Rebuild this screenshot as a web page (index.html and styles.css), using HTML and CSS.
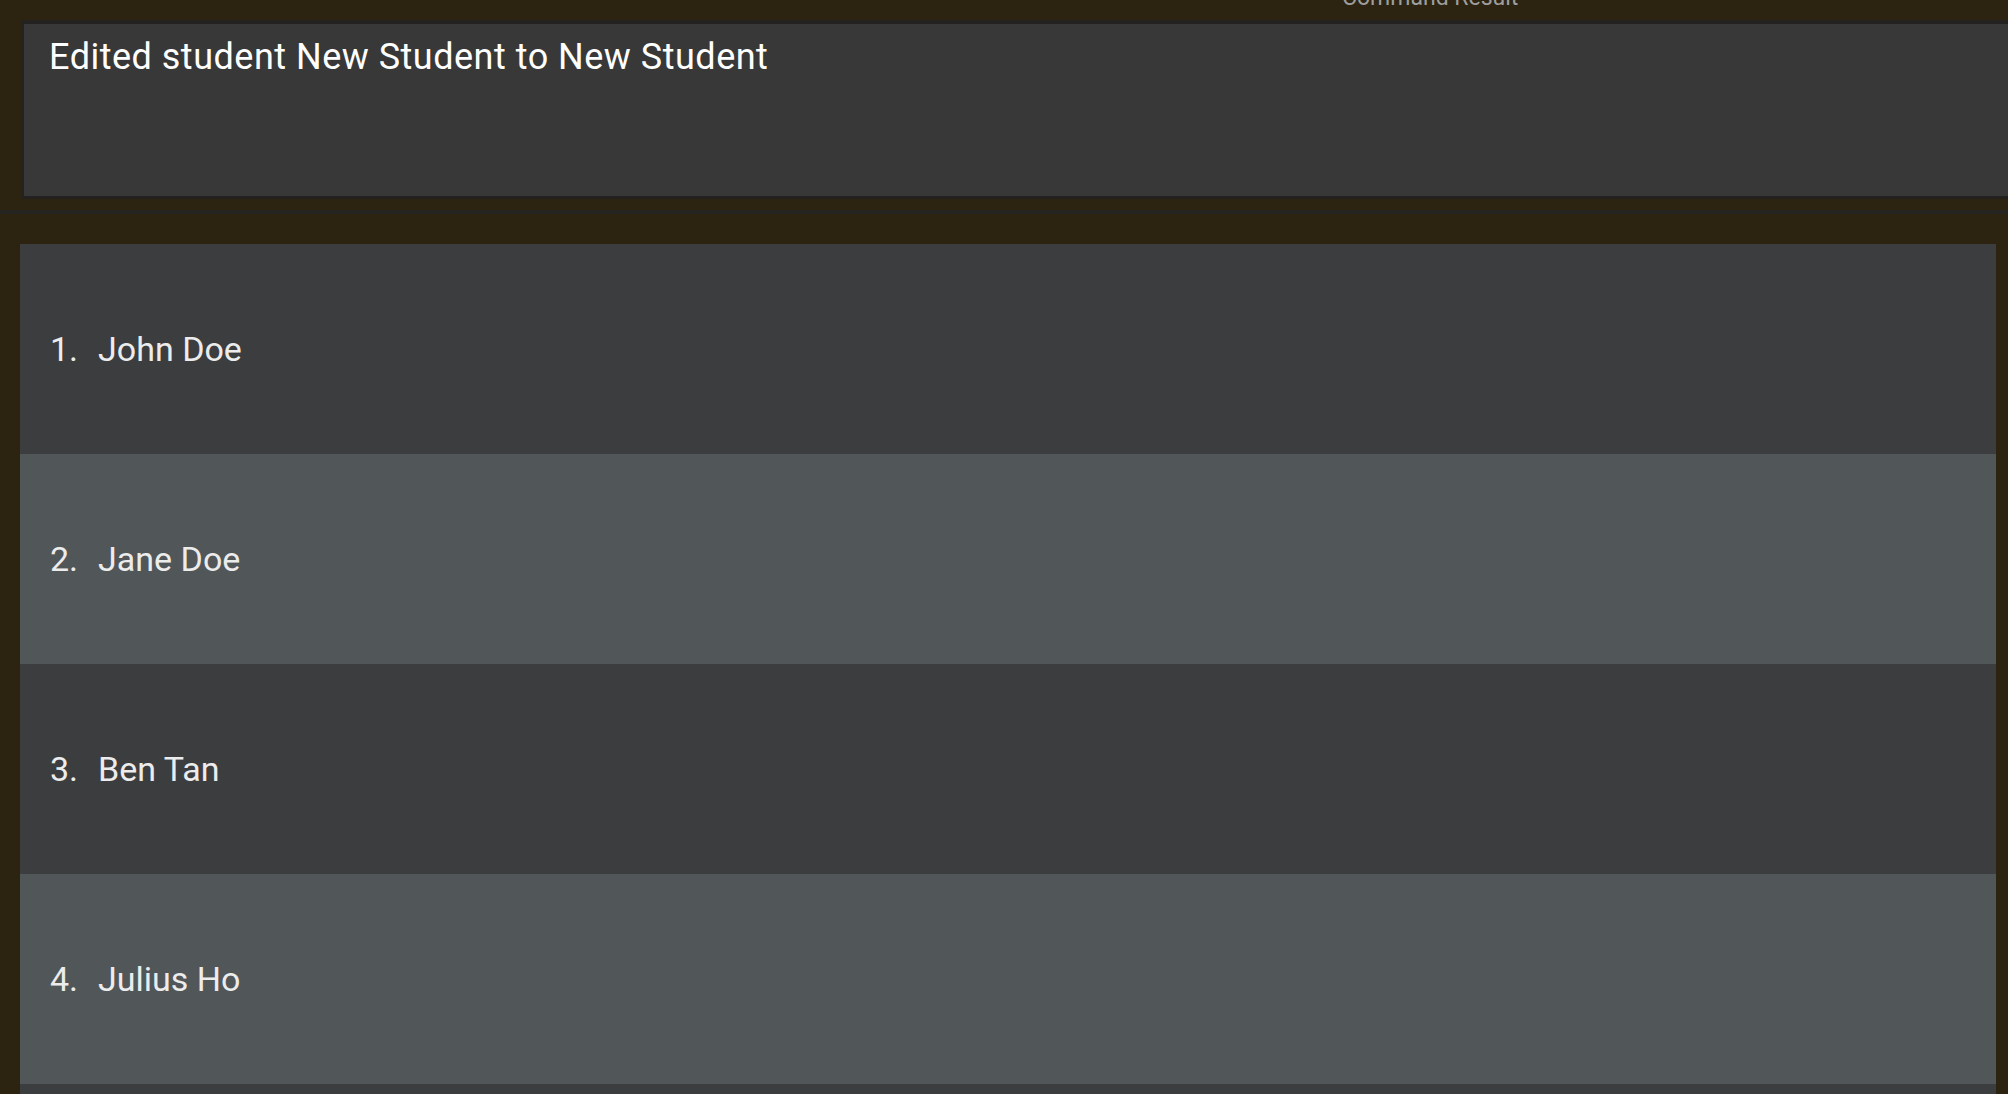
FILE: index.html
```html
<!DOCTYPE html>
<html>
<head>
<meta charset="utf-8">
<link rel="stylesheet" href="styles.css">
</head>
<body>
<div class="app">
  <div class="result-header"><span class="result-title">Command Result</span></div>
  <div class="result-box">
    <div class="result-text">Edited student New Student to New Student</div>
  </div>
  <div class="splitter"></div>
  <div class="list-pane">
    <ul class="student-list">
      <li class="row row-even"><span class="idx">1.</span><span class="name">John Doe</span></li>
      <li class="row row-odd"><span class="idx">2.</span><span class="name">Jane Doe</span></li>
      <li class="row row-even"><span class="idx">3.</span><span class="name">Ben Tan</span></li>
      <li class="row row-odd"><span class="idx">4.</span><span class="name">Julius Ho</span></li>
      <li class="row row-even"></li>
    </ul>
  </div>
</div>
</body>
</html>
```
FILE: styles.css
```css
html, body {
  margin: 0;
  padding: 0;
  height: 100%;
  overflow: hidden;
  background: #2c2410;
}
.app {
  display: flex;
  flex-direction: column;
}
.result-header {
  height: 20px;
  overflow: hidden;
}
.result-title {
  display: block;
  margin-left: 1342px;
  margin-top: -16px;
  font-family: Roboto, "Liberation Sans", sans-serif;
  font-size: 23px;
  line-height: 28px;
  color: #9e9e9e;
  white-space: nowrap;
}
.result-box {
  margin-left: 21px;
  margin-right: -20px;
  height: 172px;
  border: 3px solid #232220;
  border-top-width: 4px;
  background: #383838;
}
.result-text {
  padding: 12px 0 0 25px;
  font-family: Roboto, "Liberation Sans", sans-serif;
  font-size: 36px;
  letter-spacing: 0.5px;
  line-height: 42px;
  color: #ffffff;
}
.splitter {
  margin-top: 11px;
  height: 4px;
  background: #252421;
}
.list-pane {
  margin-top: 30px;
  margin-left: 20px;
  width: 1976px;
}
.student-list {
  list-style: none;
  margin: 0;
  padding: 0;
}
.row {
  height: 210px;
  display: flex;
  align-items: center;
  padding-left: 30px;
  font-family: Roboto, "Liberation Sans", sans-serif;
  font-size: 34px;
  color: #ececec;
}
.row-even { background: #3c3d3f; }
.row-odd { background: #515659; }
.idx { margin-right: 20px; }
```
